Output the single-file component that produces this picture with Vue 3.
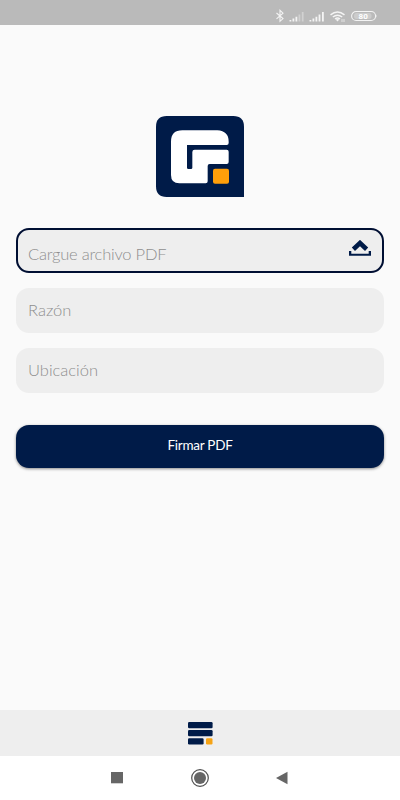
<script setup>
const fields = [
  { name: 'archivo', label: 'Cargue archivo PDF', file: true },
  { name: 'razon', label: 'Razón' },
  { name: 'ubicacion', label: 'Ubicación' }
]
</script>

<template>
  <div class="screen">
    <header class="status">
      <svg class="status-icons" viewBox="0 0 104 14" width="104" height="14">
        <g fill="none" stroke="#f4f4f4" stroke-width="1.1">
          <path d="M1.500 4 L8 9.600 L5 12.300 V1.300 L8 4.200 L1.500 9.800" />
          <path d="M55.500 5.800 Q62.500 .4 69.500 5.800 M57.800 8 Q62.500 4.300 67.200 8 M60 10 Q62.500 8 65 10" stroke-width="1.500" />
          <rect x="76.600" y="2.500" width="24" height="9" rx="4.500" />
        </g>
        <g fill="#f4f4f4">
          <path d="M14.500 11h1.800v1.500h-1.800zM17.500 9.500h1.800v3h-1.800zM20.500 7.700h1.800v4.800h-1.800z" />
          <path opacity=".4" d="M23.500 5.500h1.800v7h-1.800zM26.800 3h1.800v9.500h-1.800z" />
          <path d="M34.500 11h1.800v1.500h-1.800zM37.500 9.500h1.800v3h-1.800zM40.500 7.700h1.800v4.800h-1.800zM43.600 5.500h1.800v7h-1.800zM47 3h1.800v9.500h-1.800z" />
          <path d="M60.700 10.500 L62.500 12.500 L64.300 10.500 Q62.500 9.300 60.700 10.500z" />
          <rect x="79" y="4" width="17.500" height="6" rx="2.500" opacity=".3" />
          <path d="M101.300 5.500q1.200 1.500 0 3z" />
          <path opacity=".75" d="M66.500 10h1v3h-1zM68.500 10h1v3h-1z" />
        </g>
        <text class="battery" x="88.200" y="9.900" text-anchor="middle">80</text>
      </svg>
    </header>

    <main class="content">
      <svg class="logo" viewBox="33 33 264 243" width="88" height="81">
        <path fill="#001b48" d="M65 33H265Q297 33 297 65V276H65Q33 276 33 244V65Q33 33 65 33Z" />
        <path fill="#fff" d="M112 76H217Q251 78 251 110V114Q251 120 245 120H126V188Q126 192 130 192H138Q142 192 142 188V141Q142 134 149 134H245Q251 134 251 140V171Q251 177 245 177H194Q188 177 188 183V229Q188 235 182 235H103Q78 235 78 210V110Q78 76 112 76Z" />
        <rect fill="#ff9f0a" x="204" y="191" width="48" height="45" rx="6" />
      </svg>

      <form class="form" @submit.prevent>
        <div v-for="f in fields" :key="f.name" class="field" :class="{ file: f.file }">
          <span class="label">{{ f.label }}</span>
          <svg v-if="f.file" class="upload" viewBox="0 0 22 16" width="22" height="16">
            <path d="M4.400 9.200 11 3 17.600 9.200" fill="none" stroke="#001b48" stroke-width="4.600" />
            <path d="M0 11H2.300V13.700H19.700V11H22V15.800H0Z" fill="#001b48" />
          </svg>
        </div>
        <button class="submit"><span>Firmar PDF</span></button>
      </form>
    </main>

    <footer class="tabs">
      <svg viewBox="0 0 25 23" width="25" height="23">
        <g fill="#001b48">
          <rect width="24.600" height="6.300" rx="1.200" />
          <rect y="8" width="24.600" height="6.300" rx="1.200" />
          <rect y="16.200" width="15.600" height="6.300" rx="1.200" />
        </g>
        <rect x="18" y="16.200" width="6.500" height="6.300" rx="1.200" fill="#f5a316" />
      </svg>
    </footer>

    <nav class="system">
      <svg viewBox="0 0 20 20" width="20" height="20"><rect x="4" y="4" width="12" height="11.300" fill="#666" /></svg>
      <svg viewBox="0 0 20 20" width="20" height="20">
        <circle cx="10" cy="10" r="8.300" fill="none" stroke="#505050" stroke-width="1.200" />
        <circle cx="10" cy="10" r="6" fill="#666" />
      </svg>
      <svg viewBox="0 0 20 20" width="20" height="20"><path d="M3 10 14.500 3.800V16.200Z" fill="#666" /></svg>
    </nav>
  </div>
</template>

<style>
body {
  margin: 0;
}
</style>

<style scoped>
.screen {
  display: flex;
  flex-direction: column;
  width: 400px;
  height: 800px;
  background: #fafafa;
  font-family: Lato, "Open Sans", sans-serif;
}
.status {
  box-sizing: border-box;
  height: 25px;
  padding: 9px 21px 0 0;
  display: flex;
  justify-content: flex-end;
  background: #bababa;
}
.status-icons {
  display: block;
}
.battery {
  font: 700 8px Roboto, sans-serif;
  fill: #fff;
}
.content {
  flex: 1;
  display: flex;
  flex-direction: column;
  align-items: center;
  padding: 91px 16px 0;
}
.logo {
  display: block;
}
.form {
  width: 100%;
  margin-top: 31px;
  display: flex;
  flex-direction: column;
  gap: 15px;
}
.field {
  box-sizing: border-box;
  height: 45px;
  padding: 0 12px;
  display: flex;
  justify-content: space-between;
  border-radius: 13px;
  background: #eee;
}
.field.file {
  padding: 0 11px 0 10px;
  border: 2px solid #000f33;
}
.label {
  font-size: 16.500px;
  font-weight: 300;
  line-height: 20px;
  margin-top: 12px;
  color: #8e8e8e;
}
.file .label {
  margin-top: 14px;
  letter-spacing: -.22px;
}
.upload {
  margin-top: 10px;
}
.submit {
  height: 43px;
  margin-top: 17px;
  padding: 0 0 3px;
  border: 0;
  border-radius: 13px;
  background: #001b48;
  box-shadow: 0 1px 3px rgba(0, 0, 0, .45);
  color: #fff;
  font-family: inherit;
  font-size: 13.500px;
  letter-spacing: -.25px;
}
.tabs {
  box-sizing: border-box;
  height: 46px;
  padding-top: 12px;
  display: flex;
  justify-content: center;
  background: #eee;
}
.system {
  height: 44px;
  display: flex;
  justify-content: center;
  align-items: center;
  gap: 63px;
  background: #fff;
}
</style>
